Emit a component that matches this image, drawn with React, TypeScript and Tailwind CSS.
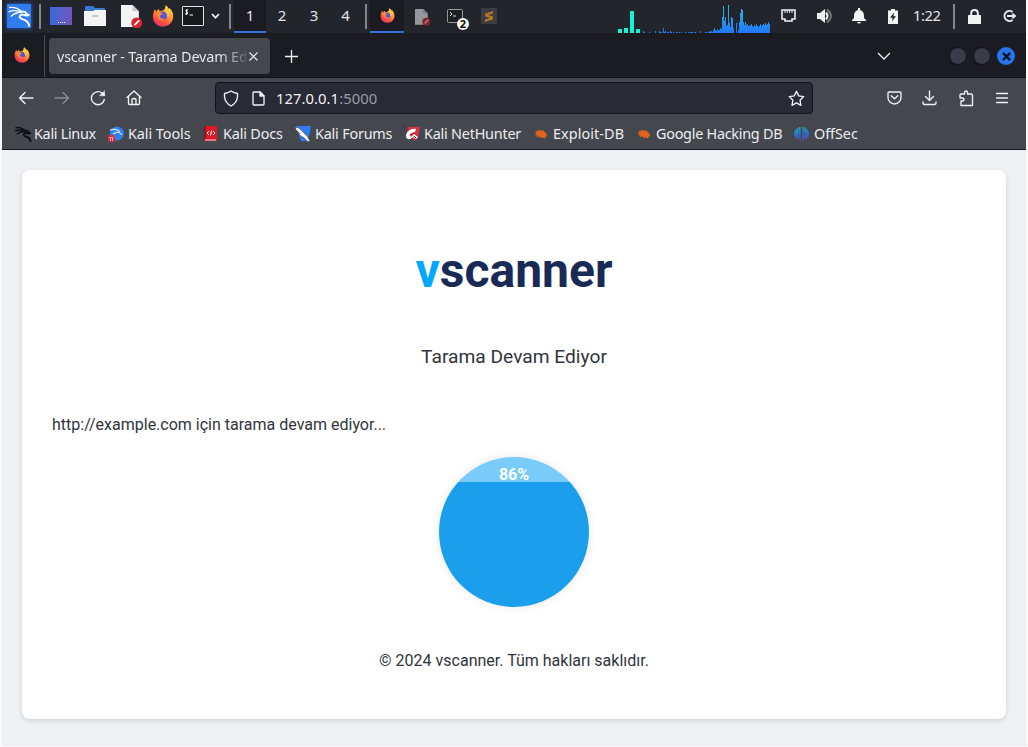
import React from "react";

const FirefoxLogo = ({ size }: { size: number }) => (
  <svg width={size} height={size} viewBox="0 0 24 24" className="shrink-0">
    <defs>
      <linearGradient id="ffOuter" x1="0.8" y1="0.05" x2="0.25" y2="1">
        <stop offset="0" stopColor="#ffdf45" />
        <stop offset="0.4" stopColor="#ff9830" />
        <stop offset="0.75" stopColor="#ff4b45" />
        <stop offset="1" stopColor="#e5316d" />
      </linearGradient>
    </defs>
    <path d="M3.2 4.5 5 7.2 7.3 4.2l1.2 2.6C11 6 12.6 6.3 13.8 4.4c.8-1.4.8-2.7 1-4.1 2 1.2 3 2.5 3.6 4.2l.7-1.2c3 3 4.3 6 4 9.8C22.600 19 18 23.500 12 23.500S1 19 1 13C1 9.500 1.800 7 3.200 4.500Z" fill="url(#ffOuter)" />
    <circle cx="12" cy="11.800" r="4.700" fill="#5b55d6" />
    <path d="M4 9c3-1.500 5-.6 7.600.4-.6 1.500-2.400 1.400-3.200 2.500.6 2.700 3.300 4 6.200 2.500-1.700 3.600-7.700 3-9-1.500Z" fill="#ff8a2d" />
    <path d="M15 .8c1.600 2 4.500 4.200 4.200 8.300-.2 3-2.400 4.400-2.600 4.400.5-3.500-1.200-5.700-3.200-7.300C15 4.600 15.300 3 15 .8Z" fill="#ffc63d" />
  </svg>
);

const Dragon = ({ size, color, bold = 1 }: { size: number; color: string; bold?: number }) => (
  <svg width={size} height={size} viewBox="0 0 24 24" fill="none" stroke={color} className="shrink-0">
    <path d="M2 3.500C7 3 12 4.500 15.500 8.300M1.500 7.800C6 6 11 6.500 15 8.300M4 12.500C6 10 10 8.500 15 8.300" strokeWidth={1.4 * bold} />
    <path d="M14.500 7.800c2-.6 4.200.3 5.500 2.400l2.300 1-3.400.3c-2-.8-4.800-1.300-5.900.2-1.300 2.200 1.500 3.300 4.200 4.100 3 1 4.600 3.200 5 6.700" strokeWidth={1.9 * bold} />
  </svg>
);

const Divider = ({ className }: { className: string }) => <div className={`h-[25px] w-[2px] shrink-0 bg-[#85868a] ${className}`} />;

const TextDocument = ({ className, width }: { className: string; width: number }) => (
  <svg width={width} height={width * 1.1} viewBox="0 0 20 22" className={`shrink-0 ${className}`}>
    <path d="M0 0h11l6 6v15H0Z" fill="#f4f4f4" />
    <path d="m11 0 6 6h-6Z" fill="#c9c9cb" />
    <circle cx="15" cy="17" r="5.200" fill="#d8232a" />
    <path d="m12.800 19.200 4.600-4.600" stroke="#fff" strokeWidth="1.700" />
  </svg>
);

const trafficHeights: number[] = [
  0, 2, 1, 0, 0, 0, 0, 1, 0, 0, 0, 0, 0, 2, 0, 0, 0, 2, 1, 1, 0, 5, 1, 2, 0, 1, 1, 0, 2, 1, 0, 1,
  0, 0, 1, 1, 0, 1, 0, 1, 0, 0, 0, 1, 0, 0, 1, 0, 1, 1, 1, 0, 1, 1, 0, 0, 0, 0, 2, 0, 0, 0, 0, 1,
  1, 0, 1, 2, 1, 2, 1, 3, 5, 3, 2, 4, 3, 3, 5, 4, 16, 27, 12, 16, 7, 8, 28, 10, 6, 16, 15, 5, 0, 0, 10, 0,
  3, 11, 20, 24, 23, 11, 8, 11, 8, 9, 7, 7, 8, 9, 7, 6, 8, 7, 9, 7, 6, 7, 9, 7, 8, 9, 8, 10, 8, 9, 11, 9,
];

function NetworkGraph() {
  return (
    <svg width="152" height="33" viewBox="0 0 152 33" className="ml-[121px] shrink-0" shapeRendering="crispEdges">
      <defs>
        <linearGradient id="traffic" gradientUnits="userSpaceOnUse" x1="0" y1="5" x2="0" y2="33">
          <stop offset="0" stopColor="#25c2dc" />
          <stop offset="0.6" stopColor="#2393ee" />
          <stop offset="1" stopColor="#2378f4" />
        </linearGradient>
      </defs>
      <path d="M0 29h4v4H0zM6 28h4v5H6zM12 11h4v22h-4zM18 29h4v4h-4z" fill="#17f2d4" />
      {trafficHeights.map((h, i) => (
        <rect key={i} x={24 + i} y={33 - h} width="1" height={h} fill="url(#traffic)" />
      ))}
    </svg>
  );
}

function DesktopPanel() {
  return (
    <div className="flex h-[35px] items-start border-b-2 border-[#1b1c21] bg-[#23252d] text-[15px] text-[#e3e4e6]">
      <div className="mt-[4px] ml-[5px] flex size-[24px] shrink-0 items-center justify-center bg-[#2f7df1] shadow-[0_0_4px_#2369d6]">
        <Dragon size={24} color="#fff" />
      </div>
      <Divider className="mt-[4px] ml-[8px]" />
      <div className="mt-[7px] ml-[9px] flex h-[18px] w-[22px] shrink-0 items-end justify-center bg-linear-to-r from-[#3468da] to-[#7255bd] pb-[2px]">
        <svg width="7" height="1" viewBox="0 0 7 1"><path d="M0 0h1v1H0zM2 0h1v1H2zM4 0h1v1H4zM6 0h1v1H6z" fill="#fff" /></svg>
      </div>
      <svg width="22" height="20" viewBox="0 0 22 20" className="mt-[6px] ml-[12px] shrink-0">
        <path d="M1 1q0-1 1-1h7l2 2h9q1 0 1 1v5H1Z" fill="#3979d5" />
        <path d="M0 5h9l2-1h11v16H0Z" fill="#f4f4f5" />
        <path d="M8 10h6" stroke="#b8bbc2" strokeWidth="1.500" />
      </svg>
      <TextDocument className="mt-[5px] ml-[15px]" width={21} />
      <div className="mt-[5px] ml-[10px] shrink-0"><FirefoxLogo size={22} /></div>
      <svg width="22" height="20" viewBox="0 0 22 20" className="mt-[6px] ml-[8px] shrink-0" fill="none">
        <rect x=".5" y=".5" width="21" height="19" rx=".5" fill="#17191d" stroke="#e4e4e5" />
        <path d="M6 4H4.500q-1.500 1 0 1.900H5q1.700 1 0 2H3M4.700 3v6M7.500 9H11" stroke="#fff" />
      </svg>
      <svg width="9" height="7" viewBox="0 0 9 7" className="mt-[13px] ml-[7px] shrink-0" fill="none" stroke="#f0f0f0" strokeWidth="1.700"><path d="m1 1 3.500 3.700L8 1" /></svg>
      <Divider className="mt-[4px] ml-[9px]" />
      <div className="ml-[3px] flex h-[33px] w-[32px] shrink-0 justify-center border-b-2 border-[#3472d7] bg-[#1a1b23] leading-[31px]">1</div>
      <div className="flex shrink-0 text-center leading-[31px]">
        <span className="w-[32px]">2</span><span className="w-[32px]">3</span><span className="w-[31px]">4</span>
      </div>
      <Divider className="mt-[4px] ml-[4px]" />
      <div className="ml-[3px] flex h-[33px] w-[34px] shrink-0 justify-center border-b-2 border-[#3472d7] bg-[#1a1b23] pt-[8px]">
        <FirefoxLogo size={15} />
      </div>
      <TextDocument className="mt-[9px] ml-[11px] opacity-55" width={15} />
      <svg width="22" height="22" viewBox="0 0 22 22" className="mt-[9px] ml-[17px] shrink-0">
        <rect x=".5" y=".5" width="15" height="13" rx="1" fill="#1d1e21" stroke="#9b9b9d" />
        <path d="m3 3 2 2-2 2M6 7h3" stroke="#ddd" fill="none" />
        <circle cx="16" cy="15" r="6" fill="#f5f5f5" />
        <text x="16" y="19" textAnchor="middle" fontFamily="Noto Sans, sans-serif" fontWeight="700" fontSize="11" fill="#111">2</text>
      </svg>
      <svg width="16" height="16" viewBox="0 0 16 16" className="mt-[8px] ml-[12px] shrink-0">
        <rect width="16" height="16" rx="1" fill="#3c3d40" />
        <path d="M12 3 4 5.700v2.600l5 1.600-5 1.600V14l8-2.700V8.600L7 7l5-1.500Z" fill="#b47625" />
      </svg>
      <NetworkGraph />
      <svg width="15" height="13" viewBox="0 0 15 13" className="mt-[9px] ml-[11px] shrink-0" fill="none" stroke="#efefef">
        <path d="M1 1h13v9h-3v2H4v-2H1Z" strokeWidth="1.600" /><path d="M4 1v3M6.300 1v3M8.700 1v3M11 1v3" strokeWidth="1" />
      </svg>
      <svg width="18" height="16" viewBox="0 0 18 16" className="mt-[8px] ml-[20px] shrink-0" fill="none">
        <path d="M1 5h3l5-4v14l-5-4H1Z" fill="#f3f3f3" /><path d="M10 4.500q3 3.500 0 7" stroke="#f3f3f3" strokeWidth="2" /><path d="M11 1.500q8 6.500 0 13" stroke="#777a80" strokeWidth="1.800" />
      </svg>
      <svg width="14" height="16" viewBox="0 0 14 16" className="mt-[8px] ml-[18px] shrink-0" fill="#f3f3f3">
        <path d="M6 0h2v2q4 1 4 6v2l2 2v1H0v-1l2-2V8q0-5 4-6ZM5 14h4q-.5 1.500-2 1.500T5 14Z" />
      </svg>
      <svg width="10" height="15" viewBox="0 0 10 15" className="mt-[9px] ml-[22px] shrink-0">
        <path d="M3 0h4v1.500h3V15H0V1.500h3Z" fill="#f3f3f3" /><path d="M6 3.500 2 8.800h2.600L4 12.500l4-5.300H5.500Z" fill="#24262d" />
      </svg>
      <span className="ml-[15px] w-[31px] shrink-0 text-[14.600px] leading-[31px] tracking-[-0.4px]">1:22</span>
      <Divider className="mt-[4px] ml-[9px]" />
      <svg width="13" height="15" viewBox="0 0 13 15" className="mt-[9px] ml-[13px] shrink-0">
        <path d="M3.200 7V4q0-3 3.300-3t3.300 3v3" fill="none" stroke="#f3f3f3" strokeWidth="1.900" /><rect y="6" width="13" height="9" rx=".5" fill="#f3f3f3" />
      </svg>
      <svg width="15" height="14" viewBox="0 0 15 14" className="mt-[9px] ml-[21px] shrink-0" fill="none" stroke="#e9e9e9" strokeWidth="2">
        <path d="M10.500 3A5 5 0 1 0 10.500 11M5 7h6" /><path d="m10.300 3.500 4.200 3.500-4.200 3.500Z" fill="#e9e9e9" stroke="none" />
      </svg>
    </div>
  );
}

function TabStrip() {
  return (
    <div className="flex h-[43px] items-start border-b border-[#101117] bg-[#1b1c21] text-[#f0f0f3]">
      <div className="flex h-full w-[43px] shrink-0 border-r border-[#4a4b4f] pt-[12px] pl-[12px]"><FirefoxLogo size={16} /></div>
      <div className="mt-[3px] ml-[4px] flex h-[36px] w-[221px] shrink-0 items-center rounded-[4px] bg-[#44474d] pl-[8px] shadow-sm">
        <span className="w-[189px] overflow-hidden bg-linear-to-r from-[#eeeef0] from-86% to-[#eeeef0]/20 bg-clip-text pt-[2px] text-[14.500px] tracking-[-0.22px] whitespace-nowrap text-transparent">vscanner - Tarama Devam Ediyor</span>
        <svg width="9" height="9" viewBox="0 0 9 9" className="ml-[3px]" stroke="currentColor" strokeWidth="1.200"><path d="m.5.5 8 8m0-8-8 8" /></svg>
      </div>
      <svg width="13" height="13" viewBox="0 0 13 13" className="mt-[15px] ml-[15px] shrink-0" stroke="currentColor" strokeWidth="1.300"><path d="M0 6.500h13M6.500 0v13" /></svg>
      <svg width="14" height="9" viewBox="0 0 14 9" className="mt-[17px] ml-auto shrink-0" fill="none" stroke="currentColor" strokeWidth="1.300"><path d="m1 1 6 6 6-6" /></svg>
      <div className="mt-[12px] mr-[11px] ml-[58px] flex shrink-0 gap-[6px]">
        <div className="size-[18px] rounded-full border border-[#0e0f13] bg-[#383c49]" />
        <div className="size-[18px] rounded-full border border-[#0e0f13] bg-[#383c49]" />
        <div className="flex size-[18px] items-center justify-center rounded-full bg-[#2873ee]">
          <svg width="9" height="9" viewBox="0 0 8 8" stroke="#0a1429" strokeWidth="2"><path d="m.8.8 6.400 6.400m0-6.400L.8 7.200" /></svg>
        </div>
      </div>
    </div>
  );
}

const navStroke = { fill: "none", stroke: "currentColor", strokeWidth: 1.35, strokeLinecap: "round", strokeLinejoin: "round" } as const;

function NavigationBar() {
  return (
    <div className="flex h-[40px] items-center text-[#f2f2f4]">
      <svg width="16" height="14" viewBox="0 0 16 14" className="ml-[16px] shrink-0" {...navStroke}><path d="M15 7H1.500M7 1.500 1.500 7 7 12.500" /></svg>
      <svg width="16" height="14" viewBox="0 0 16 14" className="ml-[20px] shrink-0 text-[#8a8c91]" {...navStroke}><path d="M1 7h13.500M9 1.500 14.500 7 9 12.500" /></svg>
      <svg width="16" height="16" viewBox="0 0 16 16" className="ml-[20px] shrink-0" {...navStroke}><path d="M14.300 9.500A6.500 6.500 0 1 1 12 3.100L14.500 5" /><path d="M14.500 1v4.800H9.700Z" fill="currentColor" strokeWidth=".5" /></svg>
      <svg width="16" height="16" viewBox="0 0 16 16" className="ml-[20px] shrink-0" {...navStroke}><path d="m1 7.500 7-6.500 7 6.500M2.500 6.500v7q0 1 1 1h9q1 0 1-1v-7M6 14.500V10q0-1.500 2-1.500t2 1.500v4.500" /></svg>
      <div className="ml-[73px] flex h-[32px] w-[598px] shrink-0 items-center rounded-[4px] border border-[#101218] bg-[#282a35] text-[14.800px]">
        <svg width="16" height="17" viewBox="0 0 16 17" className="ml-[7px] shrink-0" {...navStroke}><path d="M8 1q3 2 6.500 2.500v3.300Q14 13 8 16 2 13 1.500 6.800V3.500Q5 3 8 1Z" /></svg>
        <svg width="13" height="15" viewBox="0 0 13 15" className="ml-[13px] shrink-0" {...navStroke}><path d="M2 1h6l4 4v8q0 1-1 1H2q-1 0-1-1V2q0-1 1-1Z" /><path d="M8 1v4h4Z" fill="currentColor" /></svg>
        <span className="ml-[11px] leading-[20px] tracking-[0.05px]">127.0.0.1<span className="text-[#9b9da5]">:5000</span></span>
        <svg width="17" height="17" viewBox="0 0 17 17" className="mr-[7px] ml-auto" {...navStroke}><path d="m8.500 1.200 2.200 4.700 5 .7-3.700 3.600.9 5.100-4.400-2.500-4.500 2.500.9-5.100-3.600-3.600 5-.7Z" /></svg>
      </div>
      <svg width="15" height="14" viewBox="0 0 15 14" className="ml-[74px] shrink-0" {...navStroke}><path d="M2 1h11q1 0 1 1v4.500a6.500 6.500 0 0 1-13 0V2q0-1 1-1Zm2.200 3.700 3.300 3 3.300-3" /></svg>
      <svg width="15" height="16" viewBox="0 0 15 16" className="ml-[20px] shrink-0" {...navStroke}><path d="M7.500 1v9M3.500 6.500l4 4 4-4M1 12v1q0 1.500 1.500 1.500h10Q14 14.500 14 13v-1" /></svg>
      <svg width="15" height="17" viewBox="0 0 15 17" className="ml-[22px] shrink-0" {...navStroke}><path d="M2 15.500V11h1.500q1.500 0 1.500-1.500T3.500 8H1V5q0-1 1-1h3.500V3Q5.500 1 7 1t1.500 2v1H12q1.500 0 1.500 1.500v10Z" /></svg>
      <svg width="12" height="12" viewBox="0 0 12 12" className="ml-[22px] shrink-0" {...navStroke}><path d="M.5 1.500h11M.5 6h11M.5 10.500h11" /></svg>
    </div>
  );
}

const ForumIcon = ({ magnet = false }: { magnet?: boolean }) => (
  <svg width="16" height="16" viewBox="0 0 16 16">
    {magnet ? (
      <><path d="M4 1h12l-2 11-4 3L3 6Z" fill="#d83040" /><path d="M12 3C7 2 2 6 2 10s5 4 7 1l3 2 2-2-4-3-2 2c-1 1-3 0-2-2 1-1 3-2 5-2Z" fill="#fff" /><path d="M0 0h2M10 10l2 2" stroke="#191b20" /></>
    ) : (
      <><path d="M1 0h15l-3 15H6Z" fill="#327cf3" /><path d="m0 1 4 1 8 8 3 5-2 .8-4-4-5-3 1-1-4-4Z" fill="#fff" stroke="#26282d" strokeWidth=".5" /></>
    )}
  </svg>
);

const ToolIcon = () => (
  <svg width="17" height="16" viewBox="0 0 17 16">
    <circle cx="9" cy="7.500" r="7" fill="#2f80e7" /><path d="M2 4q7-2 10 2M5 8q6-4 9 1" fill="none" stroke="#d8e8fb" strokeWidth="1.100" />
    <rect x="0" y="9" width="7" height="7" rx="2" fill="#e42838" /><path d="M1.500 11.500h4M2.500 12v3M4.500 12v3" stroke="#f6c8cc" strokeWidth=".8" />
  </svg>
);

const DocsIcon = () => (
  <svg width="13" height="16" viewBox="0 0 13 16">
    <path d="M0 1q0-1 1-1h12v15H0Z" fill="#e01822" /><path d="M0 0h2v14H0Z" fill="#851820" /><path d="M1 14h11" stroke="#f2dada" />
    <path d="m5 5-2 2 2 2m4-4 2 2-2 2M7.500 4.500l-1 5" fill="none" stroke="#fff" />
  </svg>
);

const BugIcon = () => (
  <svg width="15" height="12" viewBox="0 0 15 12">
    <path d="m.5 3.500 2 .5L2 2.500l2 .5 1-1.500 1 1.200 3-.4 1.500 1.500 2 1.800-.5.5 2 1.200-2 .1 1 1.500-2-.3.500 2.200-2.500-1.200-2 .5-1.500-1.500-3 .3 1-1.300-3-.6L2.500 5.800Z" fill="#e4631d" />
  </svg>
);

const OffSecIcon = () => (
  <svg width="15" height="16" viewBox="0 0 15 16">
    <defs><linearGradient id="offsec" gradientUnits="userSpaceOnUse" x1="5" y1="1" x2="8" y2="16"><stop stopColor="#22a1bc" /><stop offset=".5" stopColor="#2870c8" /><stop offset="1" stopColor="#6947b4" /></linearGradient></defs>
    <path d="M4.500 1.300v12Q0 12 0 8t4.500-6.700ZM5 1h1.600v14.500Q5 14 5 12ZM8.400 1H10v11q0 2-1.600 3.500ZM10.500 1.300Q15 4 15 8t-4.500 5.300Z" fill="url(#offsec)" />
  </svg>
);

const bookmarks = [
  { label: "Kali Linux", icon: <Dragon size={18} color="#0c0e12" bold={1.35} />, cell: "w-[94px]", slot: "w-[20px]", tracking: "tracking-[-0.3px]" },
  { label: "Kali Tools", icon: <ToolIcon />, cell: "w-[96px]", slot: "w-[20px]", tracking: "tracking-[-0.06px]" },
  { label: "Kali Docs", icon: <DocsIcon />, cell: "w-[91px]", slot: "w-[19px]", tracking: "tracking-[-0.17px]" },
  { label: "Kali Forums", icon: <ForumIcon />, cell: "w-[109px]", slot: "w-[20px]", tracking: "tracking-[-0.2px]" },
  { label: "Kali NetHunter", icon: <ForumIcon magnet />, cell: "w-[130px]", slot: "w-[20px]", tracking: "tracking-[-0.22px]" },
  { label: "Exploit-DB", icon: <BugIcon />, cell: "w-[103px]", slot: "w-[19px]", tracking: "tracking-[0.08px]" },
  { label: "Google Hacking DB", icon: <BugIcon />, cell: "w-[157px]", slot: "w-[19px]", tracking: "tracking-[-0.26px]" },
  { label: "OffSec", icon: <OffSecIcon />, cell: "w-[80px]", slot: "w-[20px]", tracking: "tracking-[-0.05px]" },
];

function BookmarksBar() {
  return (
    <div className="flex h-[31px] items-center pl-[12px] text-[14.400px] leading-[20px] text-[#eeeef0]">
      {bookmarks.map((b) => (
        <div key={b.label} className={`flex shrink-0 items-center whitespace-nowrap ${b.cell}`}>
          <span className={`flex shrink-0 ${b.slot}`}>{b.icon}</span>
          <span className={b.tracking}>{b.label}</span>
        </div>
      ))}
    </div>
  );
}

function ScannerPage() {
  return (
    <main className="h-[596px] bg-[#eff0f4] px-[20px] pt-[20px] font-['Roboto',sans-serif] text-[#30343c]">
      <section className="flex h-[549px] flex-col items-center rounded-[8px] bg-white px-[30px] pt-[72px] shadow-[0_2px_5px_rgba(0,0,0,0.12)]">
        <h1 className="text-[48px] leading-[58px] font-bold text-[#192a56]"><span className="text-[#00a8ff]">v</span>scanner</h1>
        <h2 className="mt-[45px] text-[19.200px] leading-[24px]">Tarama Devam Ediyor</h2>
        <p className="mt-[44px] w-full text-[16px] leading-[24px]">http://example.com için tarama devam ediyor...</p>
        <div className="mt-[20px] flex size-[150px] shrink-0 justify-center rounded-full bg-[linear-gradient(to_bottom,#79cbf9_25px,#1b9fed_25px)] pt-[6px] text-[16px] leading-[24px] font-bold text-white shadow-[0_0_10px_rgba(0,0,0,0.1)]">86%</div>
        <footer className="mt-[42px] text-[16px] leading-[24px]">© 2024 vscanner. Tüm hakları saklıdır.</footer>
      </section>
    </main>
  );
}

export default function App() {
  return (
    <div className="h-[747px] w-[1028px] overflow-hidden bg-[#fafafa] px-[2px] font-['Noto_Sans',sans-serif]">
      <DesktopPanel />
      <TabStrip />
      <div className="h-[72px] border-b border-[#141519] bg-[#44474d]">
        <NavigationBar />
        <BookmarksBar />
      </div>
      <ScannerPage />
    </div>
  );
}
